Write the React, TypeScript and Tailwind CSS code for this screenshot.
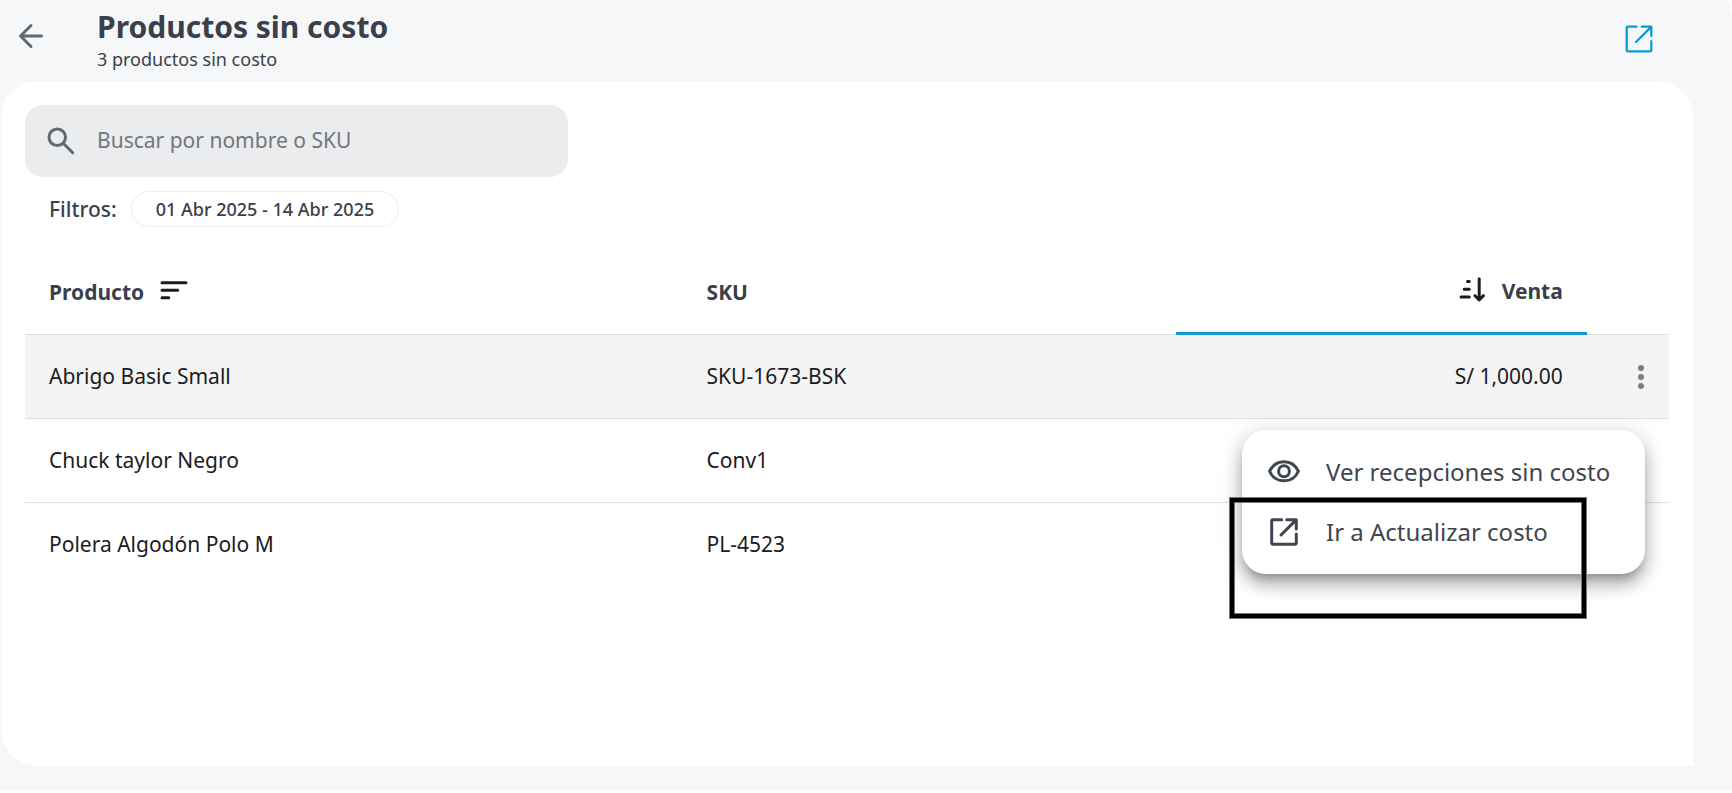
import React from "react";

interface Product {
    name: string;
    sku: string;
    sale?: string;
}

const products: Product[] = [
    { name: "Abrigo Basic Small", sku: "SKU-1673-BSK", sale: "S/ 1,000.00" },
    { name: "Chuck taylor Negro", sku: "Conv1" },
    { name: "Polera Algodón Polo M", sku: "PL-4523" }
];

function Icon({
    className,
    strokeWidth = 2,
    children
}: {
    className: string;
    strokeWidth?: number;
    children: React.ReactNode;
}) {
    return (
        <svg
            viewBox="0 0 24 24"
            fill="none"
            stroke="currentColor"
            strokeWidth={strokeWidth}
            strokeLinecap="round"
            strokeLinejoin="round"
            aria-hidden="true"
            className={`shrink-0 ${className}`}>
            {children}
        </svg>
    );
}

function OpenIcon({
    className,
    strokeWidth
}: {
    className: string;
    strokeWidth: number;
}) {
    return (
        <Icon className={className} strokeWidth={strokeWidth}>
            <path d="M10.4 3.8H4.6a.8.8 0 0 0-.8.8v14.8a.8.8 0 0 0 .8.8h14.8a.8.8 0 0 0 .8-.8v-6" />
            <path d="M13.8 3.8h6.4v6.2M19.6 4.400L10 14" />
        </Icon>
    );
}

function ActionsMenu() {
    return (
        <div
            role="menu"
            className="absolute top-[95px] right-6 z-10 w-[403px] rounded-3xl bg-white py-3 text-left text-2xl text-[#3f4652] shadow-[0_8px_8px_-4px_rgba(0,0,0,0.25),0_12px_15px_2px_rgba(0,0,0,0.16),0_4px_21px_3px_rgba(0,0,0,0.14)]">
            <button
                type="button"
                role="menuitem"
                className="flex h-[60px] w-full items-center gap-6 px-6 whitespace-nowrap">
                <Icon className="size-9">
                    <path d="M2.400 11.500C4.200 7.600 7.800 5.100 12 5.100S19.800 7.600 21.600 11.500C19.800 15.500 16.200 17.900 12 17.900S4.200 15.500 2.400 11.500Z" />
                    <circle cx="12" cy="11.5" r="3.6" />
                </Icon>
                Ver recepciones sin costo
            </button>
            <button
                type="button"
                role="menuitem"
                className="flex h-[60px] w-full items-center gap-6 px-6 whitespace-nowrap">
                <OpenIcon className="size-9" strokeWidth={2} />
                Ir a Actualizar costo
            </button>
            <div className="pointer-events-none absolute top-[68px] right-[59px] -left-3 h-[120px] border-4 border-black shadow-[0_0_0_1px_#777,inset_0_0_0_1px_#777]" />
        </div>
    );
}

export default function App() {
    return (
        <div className="min-h-screen bg-white pb-[3px] font-['Noto_Sans',sans-serif] text-[#3a3f4b]">
            <div className="rounded-tr-[8px_20px] bg-[#f6f7f9] pr-[39px] pb-6 pl-px">
                <header className="flex h-[81px] items-start">
                    <button
                        type="button"
                        aria-label="Volver"
                        className="mt-[18px] ml-3 text-[#626972]">
                        <Icon className="size-9">
                            <path d="M19 12H5.500M12 5l-7 7 7 7" />
                        </Icon>
                    </button>
                    <div className="mt-1 ml-12">
                        <h1 className="text-3xl leading-[45px] font-bold">
                            Productos sin costo
                        </h1>
                        <p className="text-lg leading-5">
                            3 productos sin costo
                        </p>
                    </div>
                    <a
                        href="#abrir"
                        aria-label="Abrir en otra ventana"
                        className="mt-[21px] mr-9 ml-auto text-[#0b9bd0]">
                        <OpenIcon className="size-9" strokeWidth={1.5} />
                    </a>
                </header>

                <main className="min-h-[685px] rounded-[36px] rounded-br-none bg-white p-6">
                    <label className="flex h-[72px] w-[33%] items-center gap-[18px] rounded-[18px] bg-[#ebecee] px-[18px] text-[#626972]">
                        <Icon className="size-9">
                            <circle cx="9.5" cy="9.5" r="5.5" />
                            <path d="M13.8 13.8L19.8 19.8" />
                        </Icon>
                        <input
                            type="text"
                            aria-label="Buscar por nombre o SKU"
                            placeholder="Buscar por nombre o SKU"
                            className="w-full bg-transparent text-[21px] outline-none placeholder:text-[#72777f]"
                        />
                    </label>

                    <div className="mt-[14px] flex items-center gap-[14px] px-6">
                        <span className="text-[21px] leading-9 font-medium">
                            Filtros:
                        </span>
                        <button
                            type="button"
                            className="h-9 rounded-full border border-[#ebecee] px-6 text-lg leading-none font-medium">
                            01 Abr 2025 - 14 Abr 2025
                        </button>
                    </div>

                    <table className="mt-6 w-full table-fixed border-separate border-spacing-0 text-[21px]">
                        <colgroup>
                            <col className="w-[40%]" />
                            <col className="w-[30%]" />
                            <col className="w-[25%]" />
                            <col className="w-[5%]" />
                        </colgroup>
                        <thead>
                            <tr className="h-[84px] text-left">
                                <th className="border-b border-[#dfdfdf] px-6 font-bold">
                                    <button
                                        type="button"
                                        className="flex items-center gap-3">
                                        Producto
                                        <Icon className="mb-1 size-9 text-[#1c1b1f]">
                                            <path d="M4 6.5h16M4 11.5h10.500M4 16.5h4.500" />
                                        </Icon>
                                    </button>
                                </th>
                                <th className="border-b border-[#dfdfdf] px-6 font-bold">
                                    SKU
                                </th>
                                <th className="border-b-[3px] border-[#0b9bd0] px-6 font-bold">
                                    <button
                                        type="button"
                                        className="ml-auto flex items-center gap-3">
                                        <Icon className="mb-1 size-9 text-[#1c1b1f]">
                                            <path d="M9 6.400h1.200M6.800 11.500h3.400M4.700 16.600h5.500M16.800 4.500v14M14 15.800l2.800 2.800 2.800-2.800" />
                                        </Icon>
                                        Venta
                                    </button>
                                </th>
                                <th className="border-b border-[#dfdfdf]" />
                            </tr>
                        </thead>
                        <tbody className="text-[#1c1b1f] [&>tr:last-child>td]:border-b-0">
                            {products.map((product, i) => (
                                <tr
                                    key={product.sku}
                                    className={`h-[84px] ${i === 0 ? "bg-[#f4f4f4]" : ""}`}>
                                    <td className="border-b border-[#dfdfdf] px-6">
                                        {product.name}
                                    </td>
                                    <td className="border-b border-[#dfdfdf] px-6">
                                        {product.sku}
                                    </td>
                                    <td className="border-b border-[#dfdfdf] px-6 text-right">
                                        {product.sale}
                                    </td>
                                    <td className="relative border-b border-[#dfdfdf] pr-[10px] text-right">
                                        {i === 0 && (
                                            <>
                                                <button
                                                    type="button"
                                                    aria-label="Acciones"
                                                    className="align-middle text-[#7a7f87]">
                                                    <svg
                                                        viewBox="0 0 24 24"
                                                        fill="currentColor"
                                                        className="size-9">
                                                        <circle cx="12" cy="6" r="2" />
                                                        <circle cx="12" cy="12" r="2" />
                                                        <circle cx="12" cy="18" r="2" />
                                                    </svg>
                                                </button>
                                                <ActionsMenu />
                                            </>
                                        )}
                                    </td>
                                </tr>
                            ))}
                        </tbody>
                    </table>
                </main>
            </div>
        </div>
    );
}
